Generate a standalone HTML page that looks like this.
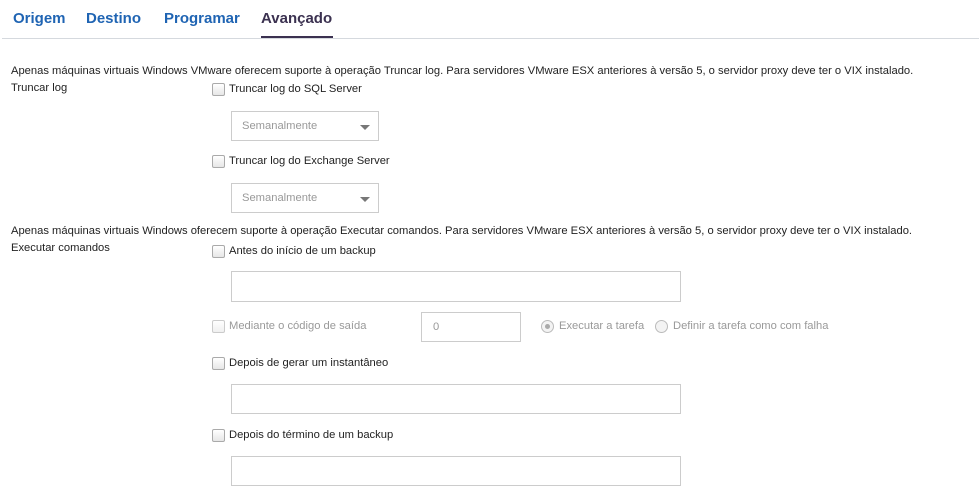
<!DOCTYPE html>
<html><head><meta charset="utf-8"><style>
body{margin:0;width:979px;height:498px;background:#fff;font-family:"Liberation Sans","Noto Sans CJK JP",sans-serif;font-size:11.2px;line-height:17px;color:#222;position:relative;overflow:hidden}
.a{position:absolute;white-space:nowrap}
.tab{position:absolute;top:10px;font-size:15px;line-height:18px;font-weight:bold;color:#1f64b3}
.cb{position:absolute;width:11px;height:11px;border:1px solid #aaa;border-radius:2px;background:linear-gradient(#fff,#e6e6e6)}
.box{position:absolute;border:1px solid #ccc;background:#fff;box-sizing:border-box}
.sel{color:#999;padding:6px 0 0 10px}
.sel:after{content:"";position:absolute;right:8px;top:13px;border:5px solid transparent;border-top:5px solid #777;border-bottom:0}
.dis{color:#999}
.rd{position:absolute;width:11px;height:11px;border:1px solid #bbb;border-radius:50%;background:#f3f3f3}
</style></head><body>
<div class="tab" style="left:13px">Origem</div>
<div class="tab" style="left:86px">Destino</div>
<div class="tab" style="left:164px">Programar</div>
<div class="tab" style="left:261px;color:#3b3150">Avançado</div>
<div class="a" style="left:2px;top:38px;width:977px;height:1px;background:#d5d9de"></div>
<div class="a" style="left:261px;top:36px;width:72px;height:2px;background:#3b3150"></div>

<div class="a" style="left:11px;top:63px">Apenas máquinas virtuais Windows VMware oferecem suporte à operação Truncar log. Para servidores VMware ESX anteriores à versão 5, o servidor proxy deve ter o VIX instalado.</div>
<div class="a" style="left:11px;top:80px">Truncar log</div>
<div class="cb" style="left:212px;top:83px"></div><div class="a" style="left:229px;top:81px">Truncar log do SQL Server</div>
<div class="box sel" style="left:231px;top:111px;width:148px;height:30px">Semanalmente</div>
<div class="cb" style="left:212px;top:155px"></div><div class="a" style="left:229px;top:153px">Truncar log do Exchange Server</div>
<div class="box sel" style="left:231px;top:183px;width:148px;height:30px">Semanalmente</div>

<div class="a" style="left:11px;top:223px">Apenas máquinas virtuais Windows oferecem suporte à operação Executar comandos. Para servidores VMware ESX anteriores à versão 5, o servidor proxy deve ter o VIX instalado.</div>
<div class="a" style="left:11px;top:240px">Executar comandos</div>
<div class="cb" style="left:212px;top:245px"></div><div class="a" style="left:229px;top:243px">Antes do início de um backup</div>
<div class="box" style="left:231px;top:271px;width:450px;height:31px"></div>
<div class="cb" style="left:212px;top:320px;opacity:.6"></div><div class="a dis" style="left:229px;top:318px">Mediante o código de saída</div>
<div class="box dis" style="left:421px;top:312px;width:100px;height:30px;padding:6px 0 0 11px">0</div>
<div class="rd" style="left:541px;top:320px"></div><div class="a" style="left:545px;top:324px;width:5px;height:5px;border-radius:50%;background:#aaa"></div>
<div class="a dis" style="left:559px;top:318px">Executar a tarefa</div>
<div class="rd" style="left:655px;top:320px"></div>
<div class="a dis" style="left:673px;top:318px">Definir a tarefa como com falha</div>
<div class="cb" style="left:212px;top:357px"></div><div class="a" style="left:229px;top:355px">Depois de gerar um instantâneo</div>
<div class="box" style="left:231px;top:384px;width:450px;height:30px"></div>
<div class="cb" style="left:212px;top:429px"></div><div class="a" style="left:229px;top:427px">Depois do término de um backup</div>
<div class="box" style="left:231px;top:456px;width:450px;height:30px"></div>
</body></html>
